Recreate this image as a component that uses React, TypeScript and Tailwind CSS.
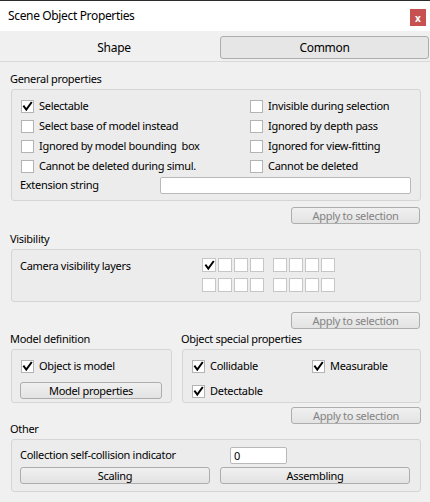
import React from "react";

const font = { fontFamily: '"Noto Sans", "Open Sans", sans-serif' };

function Check({ checked, light }: { checked?: boolean; light?: boolean }) {
  return (
    <div
      className={`w-[13px] h-[13px] shrink-0 bg-white border flex items-center justify-center ${
        light ? "border-[#c6c6c6]" : "border-[#b3b3b3]"
      }`}
    >
      {checked && (
        <svg width="11" height="11" viewBox="0 0 11 11">
          <path d="M2 5.5 L4.3 8.6 L9.2 1.8" fill="none" stroke="#000" strokeWidth="2" strokeLinecap="square" />
        </svg>
      )}
    </div>
  );
}

function CheckRow({ label, checked }: { label: string; checked?: boolean }) {
  return (
    <div className="h-[20px] flex items-center gap-[5px]">
      <Check checked={checked} />
      <span className="leading-[14px] whitespace-pre">{label}</span>
    </div>
  );
}

function Btn({ label, disabled, className = "" }: { label: string; disabled?: boolean; className?: string }) {
  return (
    <div
      className={`h-[17px] flex items-center justify-center rounded-[3px] border border-[#adadad] bg-gradient-to-b from-[#f0f0f0] to-[#e3e3e3] leading-[14px] ${
        disabled ? "text-[#838383]" : "text-black"
      } ${className}`}
    >
      {label}
    </div>
  );
}

function Label({ text, className = "" }: { text: string; className?: string }) {
  return <div className={`h-[12px] leading-[12px] ml-[-1px] ${className}`}>{text}</div>;
}

const box = "border border-[#d5d5d5] bg-[#ececec] rounded-[3px]";

export default function App() {
  return (
    <div
      className="w-[430px] h-[502px] bg-[#f0f0f0] text-[11px] tracking-[-0.3px] text-black overflow-hidden"
      style={font}
    >
      {/* title bar */}
      <div className="h-[31px] bg-white border-t border-[#2b2b2b] flex items-center justify-between">
        <span className="ml-[8px] text-[12px] tracking-[-0.35px]">Scene Object Properties</span>
        <div className="w-[16px] h-[17px] bg-[#c75050] mr-[4px] mt-[3px] flex items-center justify-center text-white text-[10px] font-bold leading-none tracking-normal">
          x
        </div>
      </div>
      {/* tabs */}
      <div className="h-[31px] border-b border-[#d9d9d9] flex pt-[5px]">
        <div className="w-[208px] ml-[10px] h-[23px] flex items-center justify-center text-[12px]">Shape</div>
        <div className="w-[209px] ml-[2px] h-[23px] flex items-center justify-center rounded-[3px] border border-[#adadad] bg-[#e6e6e6] text-[12px]">
          Common
        </div>
      </div>

      <div className="px-[11px] pr-[9px]">
        {/* General */}
        <Label text="General properties" className="mt-[11px]" />
        <div className={`${box} mt-[4px] h-[112px] pt-[6px] pl-[9px]`}>
          <div className="grid grid-cols-[229px_1fr]">
            <CheckRow label="Selectable" checked />
            <CheckRow label="Invisible during selection" />
            <CheckRow label="Select base of model instead" />
            <CheckRow label="Ignored by depth pass" />
            <CheckRow label="Ignored by model bounding  box" />
            <CheckRow label="Ignored for view-fitting" />
            <CheckRow label="Cannot be deleted during simul." />
            <CheckRow label="Cannot be deleted" />
          </div>
          <div className="flex items-center mt-[1px] ml-[-1px]">
            <span className="w-[140px]">Extension string</span>
            <div className="w-[251px] h-[17px] bg-white border border-[#b9b9b9] rounded-[2px]" />
          </div>
        </div>
        <div className="flex justify-end mt-[6px] mr-[1px]">
          <Btn label="Apply to selection" disabled className="w-[129px]" />
        </div>

        {/* Visibility */}
        <Label text="Visibility" className="mt-[9px]" />
        <div className={`${box} mt-[4px] h-[53px] pt-[8px] pl-[8px] flex`}>
          <span className="w-[182px] leading-[14px] mt-[1px]">Camera visibility layers</span>
          <div className="flex flex-col gap-[6px]">
            {[0, 1].map((r) => (
              <div key={r} className="flex gap-[9px]">
                {[0, 1].map((g) => (
                  <div key={g} className="flex gap-[2px]">
                    {[0, 1, 2, 3].map((c) => (
                      <div key={c} className="w-[14px] h-[14px] bg-white border border-[#c6c6c6] flex items-center justify-center">
                        {r === 0 && g === 0 && c === 0 && (
                          <svg width="11" height="11" viewBox="0 0 11 11">
                            <path d="M2 5.5 L4.3 8.6 L9.2 1.8" fill="none" stroke="#000" strokeWidth="2" strokeLinecap="square" />
                          </svg>
                        )}
                      </div>
                    ))}
                  </div>
                ))}
              </div>
            ))}
          </div>
        </div>
        <div className="flex justify-end mt-[10px] mr-[1px]">
          <Btn label="Apply to selection" disabled className="w-[129px]" />
        </div>

        {/* Model + Object special */}
        <div className="flex gap-[10px] mt-[4px]">
          <div className="w-[161px]">
            <Label text="Model definition" />
            <div className={`${box} mt-[4px] h-[54px] pt-[6px] pl-[9px]`}>
              <CheckRow label="Object is model" checked />
              <Btn label="Model properties" className="w-[142px] mt-[6px] ml-[-1px]" />
            </div>
          </div>
          <div className="flex-1">
            <Label text="Object special properties" />
            <div className={`${box} mt-[4px] h-[54px] pt-[6px] pl-[9px]`}>
              <div className="grid grid-cols-[120px_1fr] gap-y-[5px]">
                <CheckRow label="Collidable" checked />
                <CheckRow label="Measurable" checked />
                <CheckRow label="Detectable" checked />
              </div>
            </div>
          </div>
        </div>
        <div className="flex justify-end mt-[4px]">
          <Btn label="Apply to selection" disabled className="w-[130px]" />
        </div>

        {/* Other */}
        <Label text="Other" className="mt-[-1px]" />
        <div className={`${box} mt-[4px] h-[53px] pt-[7px] pl-[8px]`}>
          <div className="flex items-center">
            <span className="w-[210px]">Collection self-collision indicator</span>
            <div className="w-[57px] h-[17px] bg-white border border-[#b9b9b9] rounded-[2px] flex items-center pl-[3px] leading-[14px]">
              0
            </div>
          </div>
          <div className="flex gap-[10px] mt-[3px]">
            <Btn label="Scaling" className="w-[190px]" />
            <Btn label="Assembling" className="w-[190px]" />
          </div>
        </div>
      </div>
    </div>
  );
}
